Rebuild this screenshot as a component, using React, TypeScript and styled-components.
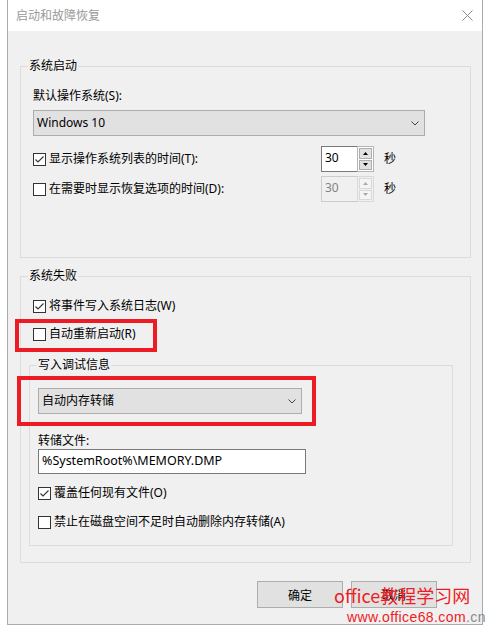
import styled, { createGlobalStyle } from "styled-components";

const GlobalStyle = createGlobalStyle`
    body {
        margin: 0;
        background: #fff;
        font-family: "Noto Sans", "Noto Sans CJK SC", sans-serif;
        font-size: 12px;
        color: #000;
    }
`;

const Window = styled.div`
    position: relative;
    margin-left: 7px;
    width: 476px;
    box-sizing: border-box;
    border: 1px solid #ababab;
    border-top: none;
    background: #f0f0f0;
`;

const TitleBar = styled.div`
    display: flex;
    align-items: center;
    justify-content: space-between;
    height: 31px;
    padding: 0 9px 0 8px;
    background: #fff;
`;

const Title = styled.span`
    color: #999;
    line-height: 16px;
`;

const Body = styled.div`
    padding: 27px 11px 16px 12px;
`;

const Group = styled.fieldset<{ $pad: string }>`
    margin: 0;
    min-width: 0;
    padding: ${(p) => p.$pad};
    border: 1px solid #dcdcdc;
    & + & {
        margin-top: 10px;
    }
`;

const SubGroup = styled.fieldset`
    margin: 15px 0 0 -4px;
    min-width: 0;
    width: 424px;
    box-sizing: border-box;
    padding: 15px 8px 15px 8px;
    border: 1px solid #dcdcdc;
`;

const Legend = styled.legend<{ $shift: number }>`
    padding: 0 1px;
    margin-left: ${(p) => p.$shift}px;
    line-height: 16px;
    font-size: 12px;
`;

const FieldLabel = styled.div<{ $gap: number }>`
    line-height: 16px;
    margin-bottom: ${(p) => p.$gap}px;
`;

const Select = styled.div<{ $width: number }>`
    position: relative;
    display: flex;
    align-items: center;
    justify-content: space-between;
    width: ${(p) => p.$width}px;
    height: 26px;
    box-sizing: border-box;
    padding: 0 5px 0 3px;
    border: 1px solid #adadad;
    background: #e1e1e1;
    line-height: 16px;
`;

const TimeGrid = styled.div`
    display: grid;
    grid-template-columns: 288px 53px auto;
    grid-auto-rows: 26px;
    row-gap: 4px;
    align-items: center;
    margin-top: 10px;
`;

const CheckRow = styled.div<{ $top?: number }>`
    position: relative;
    display: flex;
    align-items: center;
    gap: 3px;
    height: 16px;
    line-height: 16px;
    margin-top: ${(p) => p.$top ?? 0}px;
`;

const Box = styled.span`
    display: inline-flex;
    align-items: center;
    justify-content: center;
    width: 13px;
    height: 13px;
    box-sizing: border-box;
    border: 1px solid #333;
    background: #fff;
    flex: none;
`;

const Unit = styled.span`
    margin-left: 10px;
    line-height: 16px;
`;

const SpinBox = styled.div`
    display: flex;
    width: 53px;
    height: 26px;
`;

const SpinInput = styled.div<{ $disabled?: boolean }>`
    flex: 1;
    box-sizing: border-box;
    border: 1px solid ${(p) => (p.$disabled ? "#cccccc" : "#7a7a7a")};
    border-right: none;
    background: ${(p) => (p.$disabled ? "#f0f0f0" : "#fff")};
    color: ${(p) => (p.$disabled ? "#838383" : "#000")};
    padding-left: 3px;
    line-height: 22px;
`;

const SpinCol = styled.div<{ $disabled?: boolean }>`
    display: flex;
    flex-direction: column;
    gap: 1px;
    width: 17px;
    box-sizing: border-box;
    padding: 1px;
    border: 1px solid ${(p) => (p.$disabled ? "#d9d9d9" : "#b4b4b4")};
    background: ${(p) => (p.$disabled ? "#f0f0f0" : "#fff")};
`;

const SpinButton = styled.div<{ $disabled?: boolean }>`
    flex: 1;
    display: flex;
    align-items: center;
    justify-content: center;
    border: 1px solid ${(p) => (p.$disabled ? "#d9d9d9" : "#adadad")};
    background: ${(p) => (p.$disabled ? "#f4f4f4" : "#e1e1e1")};
`;

const TextBox = styled.div`
    width: 268px;
    height: 25px;
    box-sizing: border-box;
    border: 1px solid #7a7a7a;
    background: #fff;
    padding-left: 3px;
    line-height: 22px;
    font-size: 12.5px;
`;

const RedMark = styled.div<{ $l: number; $t: number; $w: number; $h: number }>`
    position: absolute;
    left: ${(p) => p.$l}px;
    top: ${(p) => p.$t}px;
    width: ${(p) => p.$w}px;
    height: ${(p) => p.$h}px;
    box-sizing: border-box;
    border: 4px solid #ed1c24;
    pointer-events: none;
`;

const ButtonBar = styled.div`
    display: flex;
    justify-content: flex-end;
    gap: 8px;
    margin: 18px 34px 0 0;
`;

const Button = styled.button`
    width: 86px;
    height: 27px;
    border: 1px solid #adadad;
    background: #e1e1e1;
    font-family: inherit;
    font-size: 12px;
    color: #000;
    padding: 0;
`;

const Watermark = styled.div`
    position: absolute;
    left: 326px;
    top: 584px;
    color: #ee1c25;
    font-family: "Noto Sans CJK SC", sans-serif;
    font-size: 18px;
    line-height: 22px;
    white-space: nowrap;
`;

const WatermarkUrl = styled.div`
    position: absolute;
    left: 339px;
    top: 609px;
    color: #ee1c25;
    font-family: "Liberation Sans", sans-serif;
    font-size: 14px;
    letter-spacing: 0.4px;
    line-height: 16px;
    white-space: nowrap;
    span {
        color: #8a8a8a;
    }
`;

const Chevron = () => (
    <svg width="8" height="5" viewBox="0 0 8 5">
        <polyline points="0.5,0.5 4,4 7.5,0.5" fill="none" stroke="#444" strokeWidth="1" />
    </svg>
);

const Check = ({ on }: { on?: boolean }) => (
    <Box>
        {on && (
            <svg width="11" height="11" viewBox="0 0 11 11">
                <polyline points="1.5,5.5 4,8 9.5,2.5" fill="none" stroke="#333" strokeWidth="1.1" />
            </svg>
        )}
    </Box>
);

const Arrow = ({ up, disabled }: { up?: boolean; disabled?: boolean }) => (
    <svg width="5" height="3" viewBox="0 0 5 3">
        <polygon points={up ? "2.5,0 5,3 0,3" : "0,0 5,0 2.5,3"} fill={disabled ? "#a8a8a8" : "#000"} />
    </svg>
);

const Spin = ({ value, disabled }: { value: string; disabled?: boolean }) => (
    <SpinBox>
        <SpinInput $disabled={disabled}>{value}</SpinInput>
        <SpinCol $disabled={disabled}>
            <SpinButton $disabled={disabled}>
                <Arrow up disabled={disabled} />
            </SpinButton>
            <SpinButton $disabled={disabled}>
                <Arrow disabled={disabled} />
            </SpinButton>
        </SpinCol>
    </SpinBox>
);

const CloseIcon = () => (
    <svg width="11" height="11" viewBox="0 0 11 11">
        <path d="M0.5 0.5 L10.5 10.5 M10.5 0.5 L0.5 10.5" stroke="#8a8a8a" strokeWidth="1" />
    </svg>
);

const App = () => {
    return (
        <>
            <GlobalStyle />
            <Window>
                <TitleBar>
                    <Title>启动和故障恢复</Title>
                    <CloseIcon />
                </TitleBar>
                <Body>
                    <Group $pad="14px 12px 55px 12px">
                        <Legend $shift={-5}>系统启动</Legend>
                        <FieldLabel $gap={6}>默认操作系统(S):</FieldLabel>
                        <Select $width={392}>
                            <span>Windows 10</span>
                            <Chevron />
                        </Select>
                        <TimeGrid>
                            <CheckRow>
                                <Check on />
                                显示操作系统列表的时间(T):
                            </CheckRow>
                            <Spin value="30" />
                            <Unit>秒</Unit>
                            <CheckRow>
                                <Check />
                                在需要时显示恢复选项的时间(D):
                            </CheckRow>
                            <Spin value="30" disabled />
                            <Unit>秒</Unit>
                        </TimeGrid>
                    </Group>
                    <Group $pad="14px 12px 16px 12px">
                        <Legend $shift={-5}>系统失败</Legend>
                        <CheckRow>
                            <Check on />
                            将事件写入系统日志(W)
                        </CheckRow>
                        <CheckRow $top={12}>
                            <Check />
                            自动重新启动(R)
                            <RedMark $l={-18} $t={-7} $w={142} $h={33} />
                        </CheckRow>
                        <SubGroup>
                            <Legend $shift={-1}>写入调试信息</Legend>
                            <Select $width={264}>
                                <span>自动内存转储</span>
                                <Chevron />
                                <RedMark $l={-22} $t={-13} $w={299} $h={50} />
                            </Select>
                            <FieldLabel $gap={0} style={{ marginTop: 19 }}>
                                转储文件:
                            </FieldLabel>
                            <TextBox>%SystemRoot%\MEMORY.DMP</TextBox>
                            <CheckRow $top={11}>
                                <Check on />
                                覆盖任何现有文件(O)
                            </CheckRow>
                            <CheckRow $top={13}>
                                <Check />
                                禁止在磁盘空间不足时自动删除内存转储(A)
                            </CheckRow>
                        </SubGroup>
                    </Group>
                    <ButtonBar>
                        <Button>确定</Button>
                        <Button>取消</Button>
                    </ButtonBar>
                </Body>
                <Watermark>office教程学习网</Watermark>
                <WatermarkUrl>
                    www.office68.com<span>.cn</span>
                </WatermarkUrl>
            </Window>
        </>
    );
};

export default App;
